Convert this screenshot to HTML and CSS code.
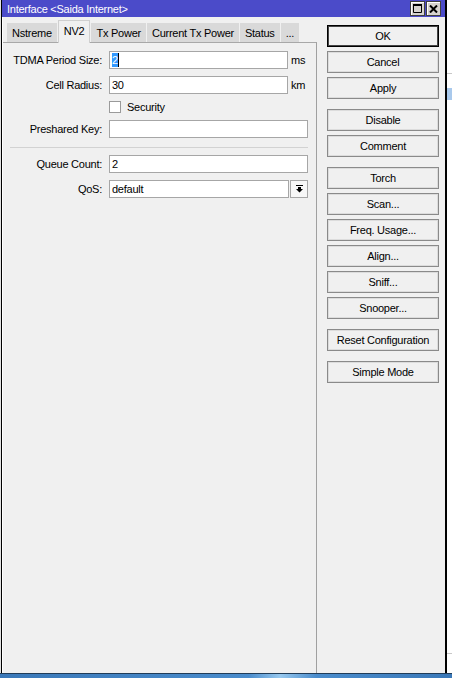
FILE: index.html
```html
<!DOCTYPE html>
<html>
<head>
<meta charset="utf-8">
<title>Interface</title>
<link rel="stylesheet" href="styles.css">
</head>
<body>
<div class="screen">
  <div class="desk">
    <div class="edge-left"></div>
    <div class="window">
      <div class="titlebar">
        <span class="title">Interface &lt;Saida Internet&gt;</span>
        <div class="tb-buttons">
          <span class="tb-btn"><svg width="9" height="9" viewBox="0 0 9 9"><path d="M0.5 1.5h8v7h-8z" fill="none" stroke="#000"/><path d="M0 0h9v2H0z" fill="#000"/></svg></span>
          <span class="tb-btn"><svg width="9" height="8" viewBox="0 0 9 8"><path d="M1 0.5L8 7.5M8 0.5L1 7.5" stroke="#000" stroke-width="2"/></svg></span>
        </div>
      </div>
      <div class="win-body">
        <div class="tabpane">
          <div class="tabs">
            <div class="tab">Nstreme</div>
            <div class="tab active">NV2</div>
            <div class="tab">Tx Power</div>
            <div class="tab">Current Tx Power</div>
            <div class="tab">Status</div>
            <div class="tab">...</div>
          </div>
          <div class="panel">
            <div class="row">
              <span class="lbl">TDMA Period Size:</span>
              <div class="field w-short"><span class="sel">2</span><span class="caret"></span></div>
              <span class="unit">ms</span>
            </div>
            <div class="row">
              <span class="lbl">Cell Radius:</span>
              <div class="field w-short">30</div>
              <span class="unit">km</span>
            </div>
            <div class="row check-row">
              <span class="checkbox"></span>
              <span class="check-label">Security</span>
            </div>
            <div class="row">
              <span class="lbl">Preshared Key:</span>
              <div class="field w-long"></div>
            </div>
            <div class="separator"></div>
            <div class="row">
              <span class="lbl">Queue Count:</span>
              <div class="field w-long">2</div>
            </div>
            <div class="row">
              <span class="lbl">QoS:</span>
              <div class="combo">
                <div class="field w-combo">default</div>
                <span class="drop-btn"><svg width="7" height="8" viewBox="0 0 7 8"><path d="M0 0h7v1H0z M2 2h3v2h2L3.5 7.5 0 4h2z" fill="#000"/></svg></span>
              </div>
            </div>
          </div>
        </div>
        <div class="actions">
          <div class="btn default">OK</div>
          <div class="btn">Cancel</div>
          <div class="btn">Apply</div>
          <div class="btn group">Disable</div>
          <div class="btn">Comment</div>
          <div class="btn group">Torch</div>
          <div class="btn">Scan...</div>
          <div class="btn">Freq. Usage...</div>
          <div class="btn">Align...</div>
          <div class="btn">Sniff...</div>
          <div class="btn">Snooper...</div>
          <div class="btn group">Reset Configuration</div>
          <div class="btn group">Simple Mode</div>
        </div>
      </div>
    </div>
    <div class="edge-right"></div>
  </div>
  <div class="taskbar"></div>
</div>
</body>
</html>
```

FILE: styles.css
```css
* { box-sizing: border-box; }
html, body { margin: 0; padding: 0; }
body {
  width: 452px;
  height: 678px;
  overflow: hidden;
  background: #fff;
  font-family: "Liberation Sans", Arial, sans-serif;
  font-size: 11px;
  letter-spacing: -0.25px;
  color: #000;
}
.screen { display: flex; flex-direction: column; height: 678px; }
.desk { display: flex; height: 673px; }
.edge-left { width: 1px; background: #e2e2e2; }
.edge-right {
  width: 5px;
  background: linear-gradient(to bottom, #fff 73px, #c8c8c8 73px, #c8c8c8 74px, #fff 74px, #fff 88px, #a9c9ec 88px, #a9c9ec 100px, #fff 100px, #fff 653px, #c8c8c8 653px, #c8c8c8 654px, #fff 654px);
}
.window {
  width: 446px;
  border-left: 1px solid #000;
  border-right: 2px solid #000;
  background: #f0f0f0;
  display: flex;
  flex-direction: column;
}
.titlebar {
  height: 17px;
  flex: none;
  background: #4b4bc9;
  color: #fff;
  display: flex;
  align-items: center;
  justify-content: space-between;
  padding: 0 4px 0 5px;
}
.title { line-height: 17px; padding-top: 1px; }
.tb-buttons { display: flex; gap: 1px; }
.tb-btn {
  width: 15px;
  height: 15px;
  background: #d6d3ce;
  border: 1px solid #404040;
  box-shadow: inset 1px 1px 0 #fff;
  display: flex;
  align-items: center;
  justify-content: center;
}
.win-body { flex: 1; display: flex; }
.tabpane {
  width: 315px;
  border-left: 1px solid #fff;
  display: flex;
  flex-direction: column;
}
.tabs {
  height: 25px;
  flex: none;
  display: flex;
  align-items: flex-end;
  padding-left: 4px;
}
.tab {
  height: 19px;
  padding: 1px 5px 0;
  margin-right: 1px;
  background: #d9d9d9;
  display: flex;
  align-items: center;
  white-space: nowrap;
}
.tab.active {
  height: 23px;
  padding: 0 5px 2px;
  margin-bottom: -1px;
  background: #f0f0f0;
  border: 1px solid #cfcfcf;
  border-bottom: none;
  position: relative;
  z-index: 1;
}
.panel {
  flex: 1;
  border-top: 1px solid #a8a8a8;
  border-right: 1px solid #a0a0a0;
  padding-top: 8px;
}
.row {
  display: flex;
  align-items: center;
  height: 18px;
  margin-bottom: 7px;
}
.lbl {
  width: 99px;
  margin-right: 7px;
  text-align: right;
  white-space: nowrap;
}
.field {
  height: 18px;
  background: #fff;
  border: 1px solid #a6a6a6;
  padding-left: 2px;
  display: flex;
  align-items: center;
  white-space: nowrap;
}
.w-short { width: 179px; }
.w-long { width: 199px; }
.w-combo { width: 180px; }
.unit { margin-left: 3px; }
.sel {
  background: #3399ff;
  color: #fff;
  line-height: 14px;
  height: 14px;
}
.caret { width: 1px; height: 14px; background: #000; }
.check-row { height: 12px; padding-left: 106px; }
.checkbox {
  width: 12px;
  height: 12px;
  background: #fff;
  border: 1px solid #9a9a9a;
}
.check-label { margin-left: 6px; }
.separator {
  width: 298px;
  height: 1px;
  margin: 9px 0 7px 7px;
  background: #d2d2d2;
}
.combo { display: flex; gap: 1px; }
.drop-btn {
  width: 18px;
  height: 18px;
  background: #f7f7f7;
  border: 1px solid #a6a6a6;
  display: flex;
  align-items: center;
  justify-content: center;
}
.actions {
  flex: 1;
  padding: 8px 0 0 10px;
  display: flex;
  flex-direction: column;
  gap: 4px;
}
.btn {
  width: 112px;
  height: 22px;
  flex: none;
  background: #f0f0f0;
  border: 1px solid #8a8a8a;
  box-shadow: inset 0 0 0 1px #dcdcdc;
  display: flex;
  align-items: center;
  justify-content: center;
  white-space: nowrap;
}
.btn.default {
  height: 22px;
  border-color: #000;
  box-shadow: inset 0 0 0 1px #444;
}
.btn.group { margin-top: 6px; }
.taskbar {
  height: 5px;
  border-top: 1px solid #203c58;
  background: linear-gradient(to right, #3a78b8 0%, #4a8ccc 55%, #98c9ef 62%, #4a8ccc 70%, #3a78b8 100%);
}
```
